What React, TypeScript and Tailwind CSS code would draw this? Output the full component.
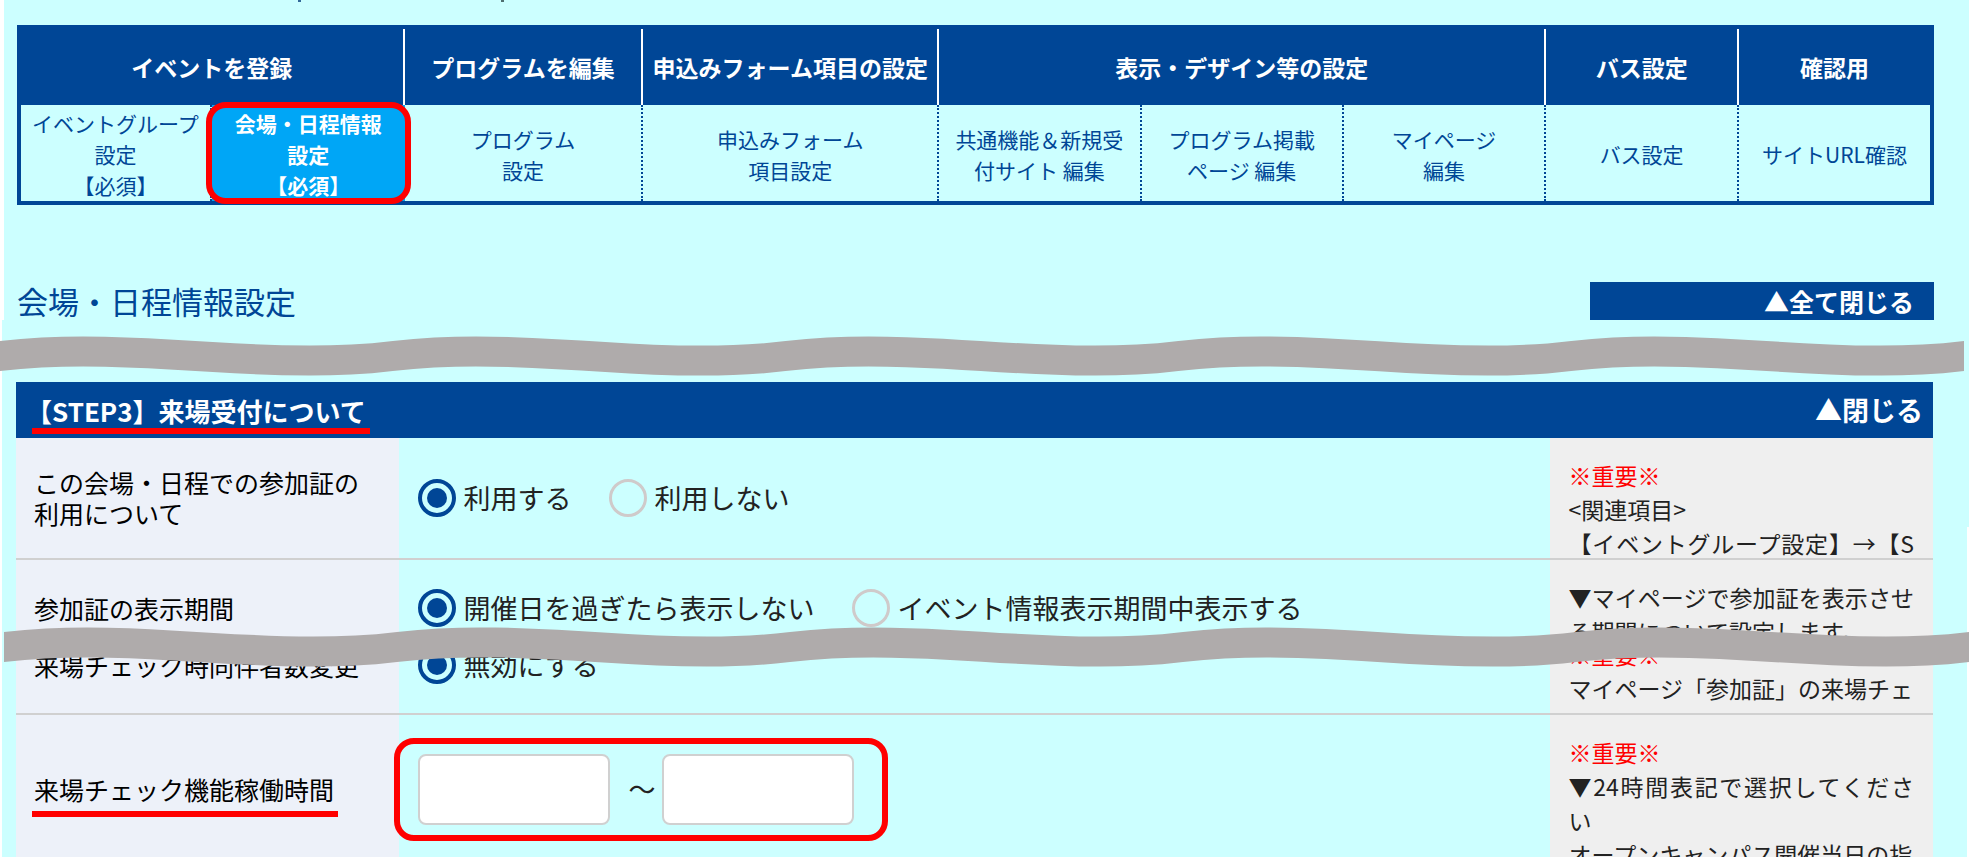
import type { ReactNode } from 'react'

type NavCell = { label: string[]; active?: boolean }

type RadioGroupProps = {
  name: string
  options: string[]
}

type RowProps = {
  label: string
  marked?: boolean
  className: string
  note: ReactNode
  children: ReactNode
}

const NAV_HEADS = [
  { label: 'イベントを登録', span: 2 },
  { label: 'プログラムを編集', span: 1 },
  { label: '申込みフォーム項目の設定', span: 1 },
  { label: '表示・デザイン等の設定', span: 3 },
  { label: 'バス設定', span: 1 },
  { label: '確認用', span: 1 },
]

const NAV_CELLS: NavCell[] = [
  { label: ['イベントグループ', '設定', '【必須】'] },
  { label: ['会場・日程情報', '設定', '【必須】'], active: true },
  { label: ['プログラム', '設定'] },
  { label: ['申込みフォーム', '項目設定'] },
  { label: ['共通機能＆新規受', '付サイト 編集'] },
  { label: ['プログラム掲載', 'ページ 編集'] },
  { label: ['マイページ', '編集'] },
  { label: ['バス設定'] },
  { label: ['サイトURL確認'] },
]

function StepNav() {
  return (
    <table className="w-full table-fixed border-separate border-spacing-0 border-4 border-[#004696] text-center">
      <colgroup>
        <col className="w-[10%]" />
        <col className="w-[10.1%]" />
        <col className="w-[12.5%]" />
        <col className="w-[15.5%]" />
        <col className="w-[10.6%]" />
        <col className="w-[10.6%]" />
        <col className="w-[10.6%]" />
        <col className="w-[10.1%]" />
        <col className="w-[10%]" />
      </colgroup>
      <thead>
        <tr className="h-[76px] bg-[#004696] text-[23px] text-white">
          {NAV_HEADS.map(h => (
            <th
              key={h.label}
              colSpan={h.span}
              className="border-r-2 border-white p-0 font-bold whitespace-nowrap last:border-r-0"
            >
              {h.label}
            </th>
          ))}
        </tr>
      </thead>
      <tbody>
        <tr className="h-24 text-[21px] leading-[31px] text-[#004696]">
          {NAV_CELLS.map(c => (
            <td
              key={c.label.join('')}
              className={
                c.active
                  ? 'relative bg-[#00a6f6] p-0 font-bold text-white'
                  : 'border-r-2 border-dotted border-[#004696] p-0 last:border-r-0'
              }
            >
              <a href="#" className="block pt-[3px] whitespace-nowrap">
                {c.label.map(line => (
                  <span key={line} className="block">{line}</span>
                ))}
              </a>
              {c.active && (
                <span className="pointer-events-none absolute -inset-x-1.5 -top-[3px] -bottom-[3px] rounded-[20px] border-6 border-[#ff0000]" />
              )}
            </td>
          ))}
        </tr>
      </tbody>
    </table>
  )
}

function RadioGroup({ name, options }: RadioGroupProps) {
  return (
    <div className="flex items-center gap-[38px]">
      {options.map((o, i) => (
        <label key={o} className="flex items-center gap-[7px] text-[27px] whitespace-nowrap">
          <input
            type="radio"
            name={name}
            defaultChecked={i === 0}
            className="size-[38px] shrink-0 appearance-none rounded-full border-3 border-[#cfcaca] bg-clip-content p-[5px] checked:border-4 checked:border-[#004696] checked:bg-[#004696]"
          />
          {o}
        </label>
      ))}
    </div>
  )
}

function Row({ label, marked, className, note, children }: RowProps) {
  return (
    <div className={`grid w-full shrink-0 grid-cols-[20%_60%_20%] border-b-2 border-[#d0d0d0] ${className}`}>
      <div className="flex items-center bg-[#edf1f9] pl-[18px] text-[25px] leading-[31px] text-black">
        <span className="relative max-w-[326px]">
          {label}
          {marked && <span className="absolute -right-1 -bottom-3 -left-0.5 h-1.5 bg-[#ff0000]" />}
        </span>
      </div>
      <div className="flex items-center pl-[19px]">{children}</div>
      <div className="min-h-0 overflow-hidden bg-[#efefef] px-[19px] pt-5 text-justify text-[23px] leading-[34px] break-all">
        {note}
      </div>
    </div>
  )
}

const TILE = 393

// Torn-paper band, repeated five times across the page
function Wave({ className }: { className: string }) {
  const top = [0, 1, 2, 3, 4]
    .map(i => `C${i * TILE + 131} -6 ${i * TILE + 262} 26 ${(i + 1) * TILE} 10`)
    .join(' ')
  const bottom = [4, 3, 2, 1, 0]
    .map(i => `C${i * TILE + 262} 56 ${i * TILE + 131} 24 ${i * TILE} 40`)
    .join(' ')
  return (
    <svg
      className={`absolute h-[50px] ${className}`}
      viewBox="0 0 1965 50"
      preserveAspectRatio="none"
      aria-hidden="true"
    >
      <path d={`M0 10 ${top} L1965 40 ${bottom} Z`} fill="#afabab" />
    </svg>
  )
}

export default function App() {
  return (
    <div className="relative flex h-screen flex-col overflow-hidden bg-[#ccffff] pr-9 pl-4 font-['Noto_Sans_CJK_JP','Noto_Sans',sans-serif] text-[#222222]">
      {/* Page edges */}
      <div className="absolute top-0 left-0 h-80 w-1 bg-white" />
      <div className="absolute top-80 bottom-0 left-0 w-0.5 bg-white" />
      <div className="absolute top-[527px] right-0 bottom-0 w-0.5 bg-white" />

      <header className="-mr-px ml-px shrink-0">
        <div className="mb-[23px] flex h-0.5 gap-[200px] pl-[281px]">
          <span className="w-[3px] bg-[#33699a]" />
          <span className="w-[3px] bg-[#4f6f70]" />
        </div>
        <StepNav />
      </header>

      <div className="mt-[77px] -mr-px ml-px flex h-[38px] shrink-0 items-center justify-between">
        <h1 className="text-[31px] text-[#004696]">会場・日程情報設定</h1>
        <button className="h-full w-[344px] bg-[#004696] pr-5 text-right text-[25px] leading-[38px] font-bold text-white">
          ▲全て閉じる
        </button>
      </div>

      <section className="mt-[62px] flex min-h-0 flex-col">
        <div className="flex h-14 shrink-0 items-center justify-between bg-[#004696] px-2.5 font-bold text-white">
          <h2 className="relative text-[26px]">
            【STEP3】来場受付について
            <span className="absolute -right-1 -bottom-1 left-1.5 h-1.5 bg-[#ff0000]" />
          </h2>
          <button className="text-[27px]">▲閉じる</button>
        </div>

        <Row
          label="この会場・日程での参加証の利用について"
          className="h-[122px]"
          note={
            <>
              <p className="text-[#ff0000]">※重要※</p>
              <p>&lt;関連項目&gt;</p>
              <p>【イベントグループ設定】→【STEP</p>
            </>
          }
        >
          <RadioGroup name="certificate" options={['利用する', '利用しない']} />
        </Row>

        <div className="flex h-[83px] shrink-0 items-start overflow-hidden">
          <Row
            label="参加証の表示期間"
            className="h-[98px]"
            note={<p>▼マイページで参加証を表示させる期間について設定します。</p>}
          >
            <RadioGroup name="period" options={['開催日を過ぎたら表示しない', 'イベント情報表示期間中表示する']} />
          </Row>
        </div>

        <div className="flex h-[72px] shrink-0 items-end overflow-hidden">
          <Row
            label="来場チェック時同伴者数変更"
            className="h-[98px]"
            note={
              <>
                <p className="text-[#ff0000]">※重要※</p>
                <p>マイページ「参加証」の来場チェ</p>
              </>
            }
          >
            <RadioGroup name="companions" options={['無効にする']} />
          </Row>
        </div>

        <Row
          label="来場チェック機能稼働時間"
          marked
          className="h-[150px]"
          note={
            <>
              <p className="text-[#ff0000]">※重要※</p>
              <p>▼24時間表記で選択してください</p>
              <p>オープンキャンパス開催当日の指</p>
            </>
          }
        >
          <div className="relative flex items-center text-[27px]">
            <input
              type="text"
              aria-label="開始時間"
              className="h-[71px] w-48 rounded-lg border-2 border-[#d0d0d0] bg-white px-3"
            />
            <span className="pr-[7px] pl-[18px]">～</span>
            <input
              type="text"
              aria-label="終了時間"
              className="h-[71px] w-48 rounded-lg border-2 border-[#d0d0d0] bg-white px-3"
            />
            <span className="pointer-events-none absolute -inset-y-4 -right-[34px] -left-6 rounded-[20px] border-6 border-[#ff0000]" />
          </div>
        </Row>
      </section>

      <Wave className="top-[331px] left-0 w-[calc(100%-5px)]" />
      <Wave className="top-[622px] left-1 w-[calc(100%-4px)]" />
    </div>
  )
}
